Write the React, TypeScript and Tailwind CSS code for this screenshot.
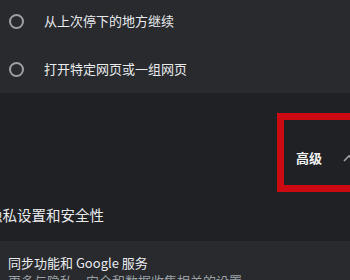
export default function App() {
  const font = { fontFamily: '"Noto Sans CJK SC", "Noto Sans", sans-serif' };
  return (
    <div className="relative w-[350px] h-[280px] overflow-hidden bg-[#202124] text-[#e8eaed]" style={font}>
      <div className="w-[365px]">
        {/* startup options card */}
        <div className="-mt-[3px] bg-[#292a2d]">
          {['从上次停下的地方继续', '打开特定网页或一组网页'].map(label => (
            <div key={label} className="flex items-center h-12 pl-[9px]">
              <div className="w-[15px] h-[15px] rounded-full border-2 border-[#9aa0a6]" />
              <span className="ml-[20px] text-[13px] leading-[18px]">{label}</span>
            </div>
          ))}
        </div>

        {/* advanced toggle */}
        <div className="pt-[48px]">
          <div className="flex items-center justify-end h-[34px] pr-[10px]">
            <span className="text-[13px] font-bold leading-[18px] text-[#f1f3f4]">高级</span>
            <svg className="ml-[21px]" width="12" height="8" viewBox="0 0 12 8">
              <path d="M1 7 L6 2 L11 7" fill="none" stroke="#9aa0a6" strokeWidth="1.6" />
            </svg>
          </div>
        </div>

        {/* section title */}
        <div className="h-[66px] flex items-end pb-[16px]">
          <h2 className="-ml-[12px] text-[14.5px] leading-[20px]">隐私设置和安全性</h2>
        </div>

        {/* sync card */}
        <div className="bg-[#292a2d] pl-[8px] pt-[13px] pb-4">
          <div className="text-[13px] leading-[18px]">同步功能和 Google 服务</div>
          <div className="text-[13px] leading-[18px] text-[#9aa0a6]">更多与隐私、安全和数据收集相关的设置</div>
        </div>
      </div>

      {/* annotation box */}
      <div className="absolute left-[277px] top-[113px] w-[100px] h-[79px] border-[7px] border-[#cc0a12]" />
    </div>
  );
}
